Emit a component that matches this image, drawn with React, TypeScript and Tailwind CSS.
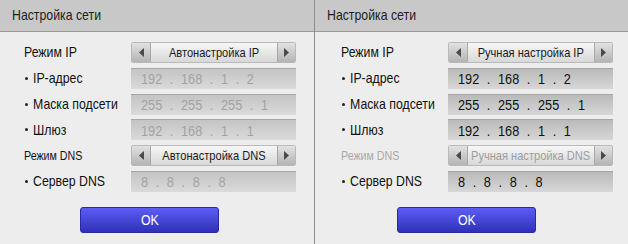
import React from "react";

const FONT = { fontFamily: '"Liberation Sans", Arial, sans-serif' };

function N({ children, center }: { children: React.ReactNode; center?: boolean }) {
  return (
    <span className={`inline-block whitespace-pre scale-x-[0.82] ${center ? "origin-center" : "origin-left"}`}>
      {children}
    </span>
  );
}

function Selector({ text, disabled }: { text: string; disabled?: boolean }) {
  return (
    <div className="flex h-[21px] w-full rounded-[2px] border border-[#b9b9b9] overflow-hidden">
      <div className="flex w-[19px] shrink-0 items-center justify-center bg-gradient-to-b from-[#e2e2e2] to-[#b4b4b4] border-r border-[#a8a8a8]">
        <svg width="5" height="9" viewBox="0 0 5 9"><path d="M5 0 L0 4.5 L5 9 Z" fill="#4a4a4a" /></svg>
      </div>
      <div
        className={`flex flex-1 items-center justify-center overflow-hidden bg-gradient-to-b from-[#f7f7f7] to-[#d8d8d8] text-[13.5px] leading-none ${disabled ? "text-[#9e9e9e]" : "text-[#1a1a1a]"}`}
      >
        <N center>{text}</N>
      </div>
      <div className="flex w-[18px] shrink-0 items-center justify-center bg-gradient-to-b from-[#e2e2e2] to-[#b4b4b4] border-l border-[#a8a8a8]">
        <svg width="5" height="9" viewBox="0 0 5 9"><path d="M0 0 L5 4.5 L0 9 Z" fill="#4a4a4a" /></svg>
      </div>
    </div>
  );
}

function Field({ value, disabled }: { value: string; disabled?: boolean }) {
  return (
    <div
      className={`flex h-[21px] w-full items-center pl-[10px] text-[15.5px] leading-none [word-spacing:5px] bg-gradient-to-b border-t border-[#a6a6a6] ${
        disabled ? "from-[#c4c4c4] to-[#dadada] text-[#a3a3a3]" : "from-[#bababa] to-[#d7d7d7] text-[#111]"
      }`}
    >
      <N>{value}</N>
    </div>
  );
}

function Label({ children, sub, small, gray }: { children: string; sub?: boolean; small?: boolean; gray?: boolean }) {
  return (
    <div
      className={`flex items-center h-[21px] whitespace-nowrap ${small ? "text-[13px]" : "text-[15px]"} ${gray ? "text-[#a8a8a8]" : "text-[#111]"}`}
    >
      {sub && <span className="shrink-0 ml-[1px] mr-[5px] w-[3px] h-[3px] bg-[#222] rounded-full" />}
      <N>{children}</N>
    </div>
  );
}

function Panel({ manual }: { manual: boolean }) {
  const d = !manual;
  return (
    <div className="flex flex-col w-[314px] h-full">
      <div className="flex shrink-0 items-center h-[32px] pl-[12px] bg-[#c8c8c8] border-b border-[#9a9a9a] text-[15px] text-[#1e1e1e]">
        <N>Настройка сети</N>
      </div>
      <div className={`flex flex-col pt-[10px] ${manual ? "pl-[26px] pr-[18px]" : "pl-[24px] pr-[20px]"}`}>
        <div className="grid grid-cols-[107px_1fr] gap-y-[4.8px]">
          <Label>Режим IP</Label>
          <Selector text={manual ? "Ручная настройка IP" : "Автонастройка IP"} />
          <Label sub>IP-адрес</Label>
          <Field value="192 . 168 . 1 . 2" disabled={d} />
          <Label sub>Маска подсети</Label>
          <Field value="255 . 255 . 255 . 1" disabled={d} />
          <Label sub>Шлюз</Label>
          <Field value="192 . 168 . 1 . 1" disabled={d} />
          <Label small gray={manual}>Режим DNS</Label>
          <Selector text={manual ? "Ручная настройка DNS" : "Автонастройка DNS"} disabled={manual} />
          <Label sub>Сервер DNS</Label>
          <Field value="8 . 8 . 8 . 8" disabled={d} />
        </div>
      </div>
      <div className={`flex mt-[15px] ${manual ? "pl-[82px]" : "pl-[80px]"}`}>
        <div className="flex items-center justify-center w-[139px] h-[26px] rounded-[3px] bg-gradient-to-b from-[#5d5df6] to-[#3030b8] border border-[#2a2aa0] text-white text-[15px]">
          <N center>OK</N>
        </div>
      </div>
    </div>
  );
}

export default function App() {
  return (
    <div className="flex w-[628px] h-[244px] bg-[#ededed] overflow-hidden" style={FONT}>
      <Panel manual={false} />
      <div className="w-px shrink-0 h-full bg-[#8f8f8f]" />
      <Panel manual={true} />
    </div>
  );
}
